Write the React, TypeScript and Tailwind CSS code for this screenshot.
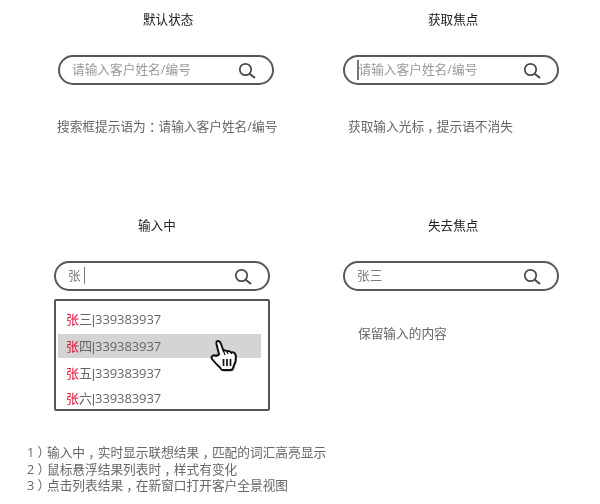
const FONT = "font-['Open_Sans','Noto_Sans_CJK_SC',sans-serif]"

const SearchIcon = () => (
  <svg width="20" height="20" viewBox="0 0 20 20" fill="none" stroke="#4a4a4a" className="shrink-0">
    <circle cx="7.5" cy="9.5" r="5.7" strokeWidth="1.7" />
    <path d="M11.7 13.7L17 18" strokeWidth="2.1" />
  </svg>
)

const HAND =
  "M11 16.5L8.5 6Q8 3 10 3Q12 3 13 6L15.5 13Q17.5 11.5 19 13.5Q21 12 23 14.5Q25.5 13.5 27 15.5Q28.5 18 27.5 23L25 30Q24.5 32 22 32L15 32Q13 32 12 29.5Q8 26 4 21Q3 19 4.5 18Q6 16.5 8 18Z"

const HandCursor = () => (
  <svg width="32" height="36" viewBox="0 0 32 36" className="absolute top-[338px] left-[208px]">
    <path d={HAND} fill="#000" opacity="0.45" transform="translate(1 1.5)" />
    <path d={HAND} fill="#fff" stroke="#111" strokeWidth="2" strokeLinejoin="round" />
    <path d="M15.5 13L17 17M19 13.5L20 16M23 14.5L23.5 16" stroke="#111" strokeWidth="1.2" fill="none" />
    <path d="M15.5 21V28M19 21V28M22.5 21V28" stroke="#111" strokeWidth="1.7" fill="none" />
  </svg>
)

// fullwidth punctuation sits in the middle of its cell in the picture
const Zh = ({ text }: { text: string }) => (
  <>
    {text.split(/([，：）])/).map((part, i) =>
      i % 2 ? (
        <span key={i} className="inline-block w-[1em] text-center [font-feature-settings:'halt']">
          {part}
        </span>
      ) : (
        part
      ),
    )}
  </>
)

const SearchBox = ({ children, className }: { children: React.ReactNode; className: string }) => (
  <div
    className={`flex h-[30px] w-[216px] items-center justify-between rounded-full border-2 border-[#585858] bg-white pr-[14px] pl-[12px] ${className}`}
  >
    <div className="flex items-center text-[#7c7c7c]">{children}</div>
    <SearchIcon />
  </div>
)

const Title = ({ children, className }: { children: React.ReactNode; className: string }) => (
  <h2 className={`text-[12.6px] leading-[20px] font-normal text-[#222] ${className}`}>{children}</h2>
)

const RESULTS = [
  { rest: "三", className: "mt-[6px]" },
  { rest: "四", className: "mt-[3px] bg-[#d4d4d4]" },
  { rest: "五", className: "mt-[3px]" },
  { rest: "六", className: "mt-[1px]" },
]

export default function App() {
  return (
    <div className={`relative h-[504px] w-[600px] overflow-hidden bg-white text-[12.7px] text-[#666] blur-[0.35px] ${FONT}`}>
      <div className="grid h-[216px] grid-cols-[300px_300px] pt-[10px]">
        <div className="flex flex-col">
          <Title className="ml-[143px]">默认状态</Title>
          <SearchBox className="mt-[25px] ml-[58px]">
            <span className="text-[#999]">请输入客户姓名/编号</span>
          </SearchBox>
          <p className="mt-[31px] ml-[57px] leading-[20px]">
            <Zh text="搜索框提示语为：请输入客户姓名/编号" />
          </p>
        </div>
        <div className="flex flex-col">
          <Title className="ml-[128px]">获取焦点</Title>
          <SearchBox className="mt-[25px] ml-[43px]">
            <span className="h-[20px] w-[1.5px] bg-[#777]" />
            <span className="text-[#999]">请输入客户姓名/编号</span>
          </SearchBox>
          <p className="mt-[31px] ml-[48px] leading-[20px]">
            <Zh text="获取输入光标，提示语不消失" />
          </p>
        </div>
      </div>

      <div className="grid h-[218px] grid-cols-[300px_300px]">
        <div className="flex flex-col">
          <Title className="ml-[138px]">输入中</Title>
          <SearchBox className="mt-[25px] ml-[54px]">
            <span>张</span>
            <span className="ml-[3px] h-[17px] w-px bg-[#777]" />
          </SearchBox>
          <div className="mt-[8px] ml-[54px] flex h-[112px] w-[216px] flex-col rounded-[2px] border-2 border-[#555] bg-white pl-[2px]">
            {RESULTS.map((r) => (
              <div
                key={r.rest}
                className={`flex h-6 w-[203px] shrink-0 items-center pt-[2px] pl-[8px] text-[13px] tracking-[-0.1px] ${r.className}`}
              >
                <span className="text-[#e0103a]">张</span>
                {r.rest}
                <span className="font-['Liberation_Sans'] text-[13px]">|</span>339383937
              </div>
            ))}
          </div>
        </div>
        <div className="flex flex-col">
          <Title className="ml-[128px]">失去焦点</Title>
          <SearchBox className="mt-[25px] ml-[43px]">张三</SearchBox>
          <p className="mt-[32px] ml-[58px] leading-[20px]">保留输入的内容</p>
        </div>
      </div>

      <div className="mt-[10px] ml-[27px] flex flex-col leading-[16.5px]">
        <p>
          1<Zh text="）输入中，实时显示联想结果，匹配的词汇高亮显示" />
        </p>
        <p>
          2<Zh text="）鼠标悬浮结果列表时，样式有变化" />
        </p>
        <p>
          3<Zh text="）点击列表结果，在新窗口打开客户全景视图" />
        </p>
      </div>

      <HandCursor />
    </div>
  )
}
